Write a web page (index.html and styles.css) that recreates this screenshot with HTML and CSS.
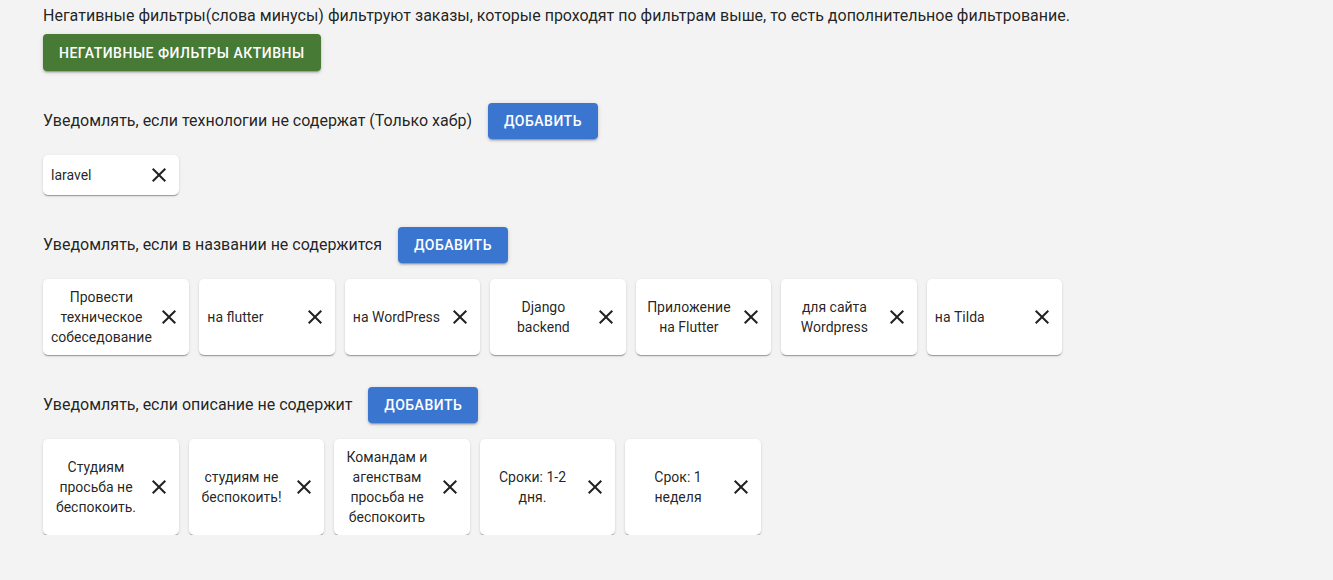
FILE: index.html
```html
<!DOCTYPE html>
<html lang="ru">
<head>
<meta charset="utf-8">
<title>Негативные фильтры</title>
<link rel="stylesheet" href="styles.css">
</head>
<body>
<div class="page">
  <p class="intro">Негативные фильтры(слова минусы) фильтруют заказы, которые проходят по фильтрам выше, то есть дополнительное фильтрование.</p>
  <button class="btn btn-green">Негативные фильтры активны</button>

  <section class="section">
    <div class="section-head">
      <span class="label">Уведомлять, если технологии не содержат (Только хабр)</span>
      <button class="btn btn-blue">Добавить</button>
    </div>
    <div class="chips">
      <div class="chip"><span class="chip-text">laravel</span><span class="chip-close"><svg viewBox="0 0 24 24"><path d="M19,6.41L17.59,5L12,10.59L6.41,5L5,6.41L10.59,12L5,17.59L6.41,19L12,13.41L17.59,19L19,17.59L13.41,12L19,6.41Z"/></svg></span></div>
    </div>
  </section>

  <section class="section">
    <div class="section-head">
      <span class="label">Уведомлять, если в названии не содержится</span>
      <button class="btn btn-blue">Добавить</button>
    </div>
    <div class="chips">
      <div class="chip"><span class="chip-text">Провести техническое собеседование</span><span class="chip-close"><svg viewBox="0 0 24 24"><path d="M19,6.41L17.59,5L12,10.59L6.41,5L5,6.41L10.59,12L5,17.59L6.41,19L12,13.41L17.59,19L19,17.59L13.41,12L19,6.41Z"/></svg></span></div>
      <div class="chip"><span class="chip-text">на flutter</span><span class="chip-close"><svg viewBox="0 0 24 24"><path d="M19,6.41L17.59,5L12,10.59L6.41,5L5,6.41L10.59,12L5,17.59L6.41,19L12,13.41L17.59,19L19,17.59L13.41,12L19,6.41Z"/></svg></span></div>
      <div class="chip"><span class="chip-text">на WordPress</span><span class="chip-close"><svg viewBox="0 0 24 24"><path d="M19,6.41L17.59,5L12,10.59L6.41,5L5,6.41L10.59,12L5,17.59L6.41,19L12,13.41L17.59,19L19,17.59L13.41,12L19,6.41Z"/></svg></span></div>
      <div class="chip"><span class="chip-text">Django backend</span><span class="chip-close"><svg viewBox="0 0 24 24"><path d="M19,6.41L17.59,5L12,10.59L6.41,5L5,6.41L10.59,12L5,17.59L6.41,19L12,13.41L17.59,19L19,17.59L13.41,12L19,6.41Z"/></svg></span></div>
      <div class="chip"><span class="chip-text">Приложение на Flutter</span><span class="chip-close"><svg viewBox="0 0 24 24"><path d="M19,6.41L17.59,5L12,10.59L6.41,5L5,6.41L10.59,12L5,17.59L6.41,19L12,13.41L17.59,19L19,17.59L13.41,12L19,6.41Z"/></svg></span></div>
      <div class="chip"><span class="chip-text">для сайта Wordpress</span><span class="chip-close"><svg viewBox="0 0 24 24"><path d="M19,6.41L17.59,5L12,10.59L6.41,5L5,6.41L10.59,12L5,17.59L6.41,19L12,13.41L17.59,19L19,17.59L13.41,12L19,6.41Z"/></svg></span></div>
      <div class="chip"><span class="chip-text">на Tilda</span><span class="chip-close"><svg viewBox="0 0 24 24"><path d="M19,6.41L17.59,5L12,10.59L6.41,5L5,6.41L10.59,12L5,17.59L6.41,19L12,13.41L17.59,19L19,17.59L13.41,12L19,6.41Z"/></svg></span></div>
    </div>
  </section>

  <section class="section">
    <div class="section-head">
      <span class="label">Уведомлять, если описание не содержит</span>
      <button class="btn btn-blue">Добавить</button>
    </div>
    <div class="chips">
      <div class="chip"><span class="chip-text">Студиям просьба не беспокоить.</span><span class="chip-close"><svg viewBox="0 0 24 24"><path d="M19,6.41L17.59,5L12,10.59L6.41,5L5,6.41L10.59,12L5,17.59L6.41,19L12,13.41L17.59,19L19,17.59L13.41,12L19,6.41Z"/></svg></span></div>
      <div class="chip"><span class="chip-text">студиям не беспокоить!</span><span class="chip-close"><svg viewBox="0 0 24 24"><path d="M19,6.41L17.59,5L12,10.59L6.41,5L5,6.41L10.59,12L5,17.59L6.41,19L12,13.41L17.59,19L19,17.59L13.41,12L19,6.41Z"/></svg></span></div>
      <div class="chip"><span class="chip-text">Командам и агенствам просьба не беспокоить</span><span class="chip-close"><svg viewBox="0 0 24 24"><path d="M19,6.41L17.59,5L12,10.59L6.41,5L5,6.41L10.59,12L5,17.59L6.41,19L12,13.41L17.59,19L19,17.59L13.41,12L19,6.41Z"/></svg></span></div>
      <div class="chip"><span class="chip-text">Сроки: 1-2 дня.</span><span class="chip-close"><svg viewBox="0 0 24 24"><path d="M19,6.41L17.59,5L12,10.59L6.41,5L5,6.41L10.59,12L5,17.59L6.41,19L12,13.41L17.59,19L19,17.59L13.41,12L19,6.41Z"/></svg></span></div>
      <div class="chip"><span class="chip-text">Срок: 1 неделя</span><span class="chip-close"><svg viewBox="0 0 24 24"><path d="M19,6.41L17.59,5L12,10.59L6.41,5L5,6.41L10.59,12L5,17.59L6.41,19L12,13.41L17.59,19L19,17.59L13.41,12L19,6.41Z"/></svg></span></div>
    </div>
  </section>
</div>
</body>
</html>
```

FILE: styles.css
```css
html, body {
  margin: 0;
  padding: 0;
  background: #f3f3f3;
}

body {
  font-family: Roboto, "Noto Sans", "Liberation Sans", sans-serif;
  color: rgba(0, 0, 0, 0.87);
}

.page {
  padding: 4px 43px 0;
}

.intro {
  margin: 0;
  font-size: 16px;
  line-height: 24px;
}

.btn {
  display: inline-flex;
  align-items: center;
  justify-content: center;
  height: 36px;
  padding: 0 16px;
  border: 0;
  border-radius: 4px;
  font-family: inherit;
  font-size: 14px;
  font-weight: 500;
  letter-spacing: 0.5px;
  text-transform: uppercase;
  white-space: nowrap;
  color: #fff;
  box-shadow: 0 3px 1px -2px rgba(0, 0, 0, 0.2), 0 2px 2px 0 rgba(0, 0, 0, 0.14), 0 1px 5px 0 rgba(0, 0, 0, 0.12);
  cursor: pointer;
}

.btn-green {
  margin-top: 6px;
  height: 37px;
  background: #477a35;
}

.btn-blue {
  background: #3a76d0;
}

.section {
  margin-top: 32px;
}

.section-head {
  display: flex;
  align-items: center;
  gap: 16px;
  height: 36px;
}

.label {
  font-size: 16px;
  line-height: 24px;
}

.chips {
  display: flex;
  flex-wrap: wrap;
  align-items: stretch;
  gap: 10px;
  margin-top: 16px;
}

.chip {
  display: flex;
  align-items: center;
  justify-content: space-between;
  gap: 5.5px;
  box-sizing: border-box;
  min-width: 135.5px;
  padding: 8px;
  background: #fff;
  border-radius: 5px;
  box-shadow: 0 2px 1px -1px rgba(0, 0, 0, 0.2), 0 1px 1px 0 rgba(0, 0, 0, 0.14), 0 1px 3px 0 rgba(0, 0, 0, 0.12);
}

.chip-text {
  max-width: 90px;
  min-width: min-content;
  font-size: 14px;
  line-height: 20px;
  text-align: center;
}

.chip-close {
  display: flex;
  width: 24px;
  height: 24px;
  flex: none;
}

.chip-close svg {
  width: 24px;
  height: 24px;
  fill: rgba(0, 0, 0, 0.87);
}
```
